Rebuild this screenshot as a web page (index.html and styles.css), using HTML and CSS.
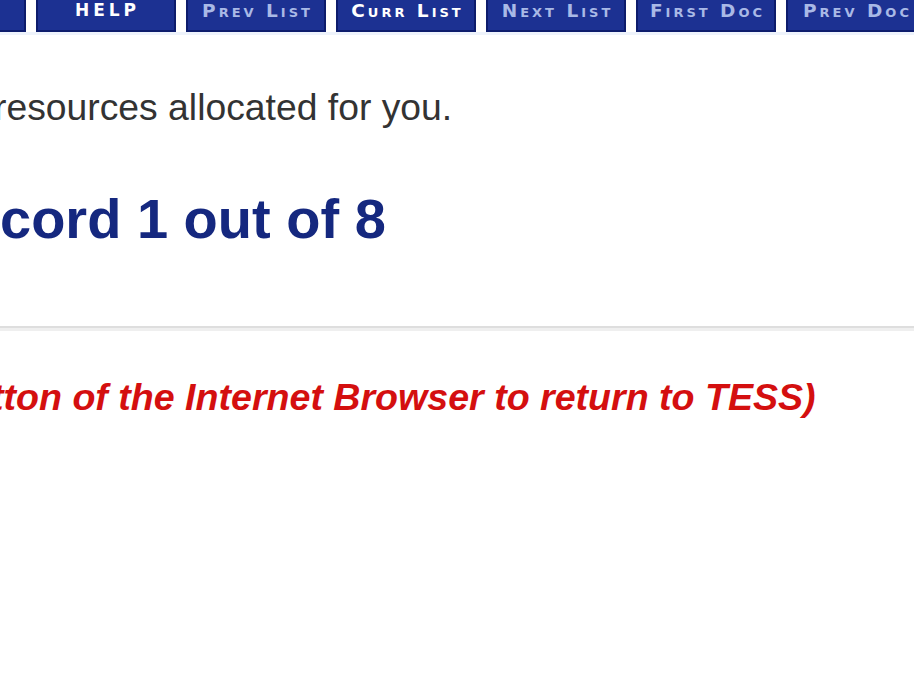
FILE: index.html
```html
<!DOCTYPE html>
<html>
<head>
<meta charset="utf-8">
<link rel="stylesheet" href="styles.css">
</head>
<body>
<div class="toolbar">
  <a class="btn"></a>
  <a class="btn on caps">HELP</a>
  <a class="btn">Prev List</a>
  <a class="btn on">Curr List</a>
  <a class="btn">Next List</a>
  <a class="btn">First Doc</a>
  <a class="btn">Prev Doc</a>
</div>
<p class="intro">resources allocated for you.</p>
<h1 class="record">cord 1 out of 8</h1>
<hr class="rule">
<p class="note">tton of the Internet Browser to return to TESS)</p>
</body>
</html>
```
FILE: styles.css
```css
html, body {
  margin: 0;
  padding: 0;
  background: #ffffff;
  overflow: hidden;
}
body {
  width: 914px;
  height: 692px;
  font-family: "Liberation Sans", Arial, sans-serif;
}
.toolbar {
  display: flex;
  gap: 10px;
  margin-left: -114px;
  height: 32px;
  border-bottom: 3px solid #eef3fc;
}
.btn {
  flex: 0 0 140px;
  box-sizing: border-box;
  height: 32px;
  background: #1c3192;
  border: 2px solid #0d1c6c;
  border-top: 0;
  color: #a9b9e6;
  font-family: "DejaVu Sans", sans-serif;
  font-weight: bold;
  font-variant: small-caps;
  font-size: 18.5px;
  letter-spacing: 3px;
  display: flex;
  align-items: center;
  justify-content: center;
  padding-bottom: 10px;
  padding-left: 3px;
  white-space: nowrap;
}
.btn.on {
  color: #ffffff;
}
.btn.caps {
  font-size: 17px;
  letter-spacing: 4px;
}
.intro {
  margin: 0;
  padding-top: 52px;
  margin-left: -6px;
  font-size: 37.3px;
  line-height: 40px;
  color: #333333;
  white-space: nowrap;
}
.record {
  margin: 0;
  padding-top: 60px;
  font-size: 56px;
  line-height: 64px;
  color: #15287f;
  font-weight: bold;
  white-space: nowrap;
}
.rule {
  margin: 0;
  margin-top: 75px;
  height: 0;
  border: 0;
  border-top: 2px solid #dedede;
  border-bottom: 3px solid #efefef;
}
.note {
  margin: 0;
  padding-top: 46px;
  margin-left: -9px;
  font-size: 37.6px;
  line-height: 40px;
  color: #d40f0f;
  font-weight: bold;
  font-style: italic;
  white-space: nowrap;
}
```
